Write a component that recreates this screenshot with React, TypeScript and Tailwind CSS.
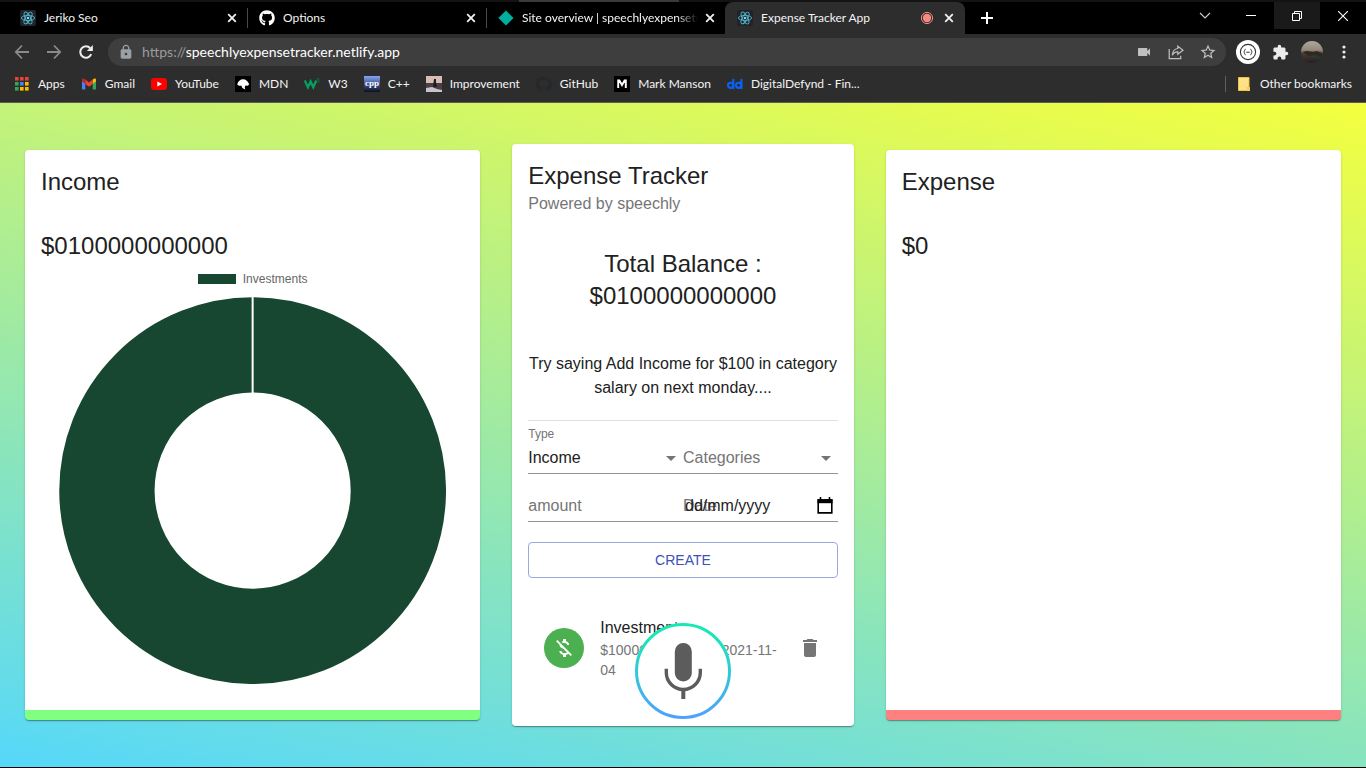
import type { ReactNode } from "react";
import { FaGithub } from "react-icons/fa";
import { MdDelete, MdExtension, MdLock, MdMoneyOff, MdStarBorder, MdVideocam } from "react-icons/md";

function ReactLogo() {
  return (
    <svg viewBox="0 0 16 16" className="size-4 shrink-0" aria-hidden="true">
      <rect width="16" height="16" rx="2" fill="#20232a" />
      <g fill="none" stroke="#53b4cb" strokeWidth="0.9">
        <ellipse cx="8" cy="8" rx="6.6" ry="2.6" />
        <ellipse cx="8" cy="8" rx="6.6" ry="2.6" transform="rotate(60 8 8)" />
        <ellipse cx="8" cy="8" rx="6.6" ry="2.6" transform="rotate(120 8 8)" />
      </g>
      <circle cx="8" cy="8" r="1.3" fill="#7fdcf0" />
    </svg>
  );
}

function CloseIcon() {
  return (
    <svg viewBox="0 0 16 16" className="size-4" fill="none" stroke="#f1f1f1" strokeWidth="1.8" aria-hidden="true">
      <path d="M4.2 4.2l7.6 7.6M11.8 4.2l-7.6 7.6" />
    </svg>
  );
}

type TabProps = { title: string; icon: ReactNode; active?: boolean; divider?: boolean; recording?: boolean };

function Tab({ title, icon, active, divider, recording }: TabProps) {
  return (
    <div
      className={
        active
          ? "relative flex h-8 w-[240px] min-w-0 items-center gap-2 rounded-t-lg bg-[#2d2d2d] pr-2 pl-3"
          : "relative flex h-8 w-[239px] min-w-0 items-center gap-2 pr-[7px] pl-3"
      }
    >
      {icon}
      <button
        type="button"
        className={
          divider || active
            ? "min-w-0 flex-1 text-left whitespace-nowrap"
            : "-mr-1 min-w-0 flex-1 mask-r-from-88% mask-r-to-100% text-left whitespace-nowrap"
        }
      >
        {title}
      </button>
      {recording && (
        <svg viewBox="0 0 14 14" className="-mr-0.5 size-4 p-px" aria-hidden="true">
          <circle cx="7" cy="7" r="5.6" fill="none" stroke="#f28b82" strokeWidth="1" />
          <circle cx="7" cy="7" r="4.2" fill="#f28b82" />
        </svg>
      )}
      <button type="button" aria-label={`Close ${title}`}>
        <CloseIcon />
      </button>
      {divider && <span className="absolute top-1.5 -right-px h-5 w-px bg-[#4a4a4a]" />}
    </div>
  );
}

function WindowControls() {
  return (
    <div className="ml-auto flex h-[27px] self-start text-white">
      <button type="button" aria-label="Search tabs" className="flex w-[46px] items-center justify-center">
        <svg viewBox="0 0 12 12" className="size-3" fill="none" stroke="#cfcfcf" strokeWidth="1.1">
          <path d="M1 3l5 5 5-5" />
        </svg>
      </button>
      <button type="button" aria-label="Minimize" className="flex w-[46px] items-center justify-center">
        <svg viewBox="0 0 10 10" className="size-2.5" stroke="currentColor">
          <path d="M0 4.5h10" />
        </svg>
      </button>
      <button type="button" aria-label="Restore" className="flex w-[46px] items-center justify-center bg-[#1a1a1a]">
        <svg viewBox="0 0 10 10" className="size-2.5" fill="none" stroke="currentColor">
          <path d="M0.5 2.5h7v7h-7zM2.5 2.5v-2h7v7h-2" />
        </svg>
      </button>
      <button type="button" aria-label="Close window" className="flex w-[46px] items-center justify-center">
        <svg viewBox="0 0 10 10" className="size-2.5" fill="none" stroke="currentColor" strokeWidth="1.1">
          <path d="M0 0l10 10M10 0L0 10" />
        </svg>
      </button>
    </div>
  );
}

function TabStrip() {
  return (
    <div className="bg-black">
      <div className="flex h-0.5 bg-[#131313]">
        <div className="ml-[38%] w-40 bg-[#3a3a3a]" />
      </div>
      <div className="flex h-8 items-center pl-2">
        <Tab title="Jeriko Seo" icon={<ReactLogo />} divider />
        <Tab title="Options" icon={<FaGithub className="size-4 shrink-0 text-white" />} divider />
        <Tab
          title="Site overview | speechlyexpensetr"
          icon={
            <svg viewBox="0 0 16 16" className="size-4 shrink-0" aria-hidden="true">
              <path d="M8 0.4L15.6 8 8 15.6 0.4 8z" fill="#00ad9f" />
            </svg>
          }
        />
        <Tab title="Expense Tracker App" icon={<ReactLogo />} active recording />
        <button type="button" aria-label="New tab" className="ml-4 flex size-3 items-center justify-center">
          <svg viewBox="0 0 12 12" className="size-3" stroke="#fff" strokeWidth="2">
            <path d="M6 0v12M0 6h12" />
          </svg>
        </button>
        <WindowControls />
      </div>
    </div>
  );
}

function AddressBar() {
  return (
    <div className="flex items-center pt-1 pr-1.5">
      <div className="flex pl-1.5">
        <button type="button" aria-label="Back" className="flex h-7 w-8 items-center justify-center">
          <svg viewBox="0 0 16 16" className="size-4" fill="none" stroke="#8a8a8a" strokeWidth="1.8">
            <path d="M15 8H2M8 1.5L1.8 8 8 14.5" />
          </svg>
        </button>
        <button type="button" aria-label="Forward" className="flex h-7 w-8 items-center justify-center">
          <svg viewBox="0 0 16 16" className="size-4" fill="none" stroke="#8a8a8a" strokeWidth="1.8">
            <path d="M1 8h13M8 1.5L14.2 8 8 14.5" />
          </svg>
        </button>
        <button type="button" aria-label="Reload" className="flex h-7 w-8 items-center justify-center">
          <svg viewBox="0 0 16 16" className="size-4" fill="none" stroke="#ececec" strokeWidth="2.1">
            <path d="M13.2 10.2A5.7 5.7 0 1 1 12.2 4.2" />
            <path d="M14.9 1v6H8.9z" fill="#ececec" stroke="none" />
          </svg>
        </button>
      </div>
      <div className="ml-1.5 flex h-7 flex-1 items-center rounded-full bg-[#3e3e3e] pr-0.5 pl-2.5 text-[#c0c0c0]">
        <MdLock className="size-4 text-[#9aa0a6]" />
        <div className="ml-2 flex-1 text-sm text-[#9b9b9b]">
          https://<span className="text-white">speechlyexpensetracker.netlify.app</span>
        </div>
        <button type="button" aria-label="Camera" className="flex w-8 justify-center">
          <MdVideocam className="size-4" />
        </button>
        <button type="button" aria-label="Share" className="flex w-8 justify-center">
          <svg viewBox="0 0 16 16" className="size-4" fill="none" stroke="currentColor" strokeWidth="1.2">
            <path d="M1.2 5v9.6h11.5v-2.8" />
            <path d="M9.8 2.1L15 6.2 9.8 10.3V7.9C7 7.8 5.4 9 4.3 11.3 4.5 7.6 6.4 4.9 9.8 4.5z" />
          </svg>
        </button>
        <button type="button" aria-label="Bookmark this page" className="flex w-8 justify-center">
          <MdStarBorder className="size-[18px]" />
        </button>
      </div>
      <div className="flex items-center pl-1.5">
        <button type="button" aria-label="JSON extension" className="flex w-8 justify-center">
          <svg viewBox="0 0 24 24" className="size-6">
            <circle cx="12" cy="12" r="12" fill="#fff" />
            <circle cx="12" cy="12" r="7.6" fill="none" stroke="#333" strokeWidth="1.1" />
            <path
              d="M9.6 9.2c-1.3 0-.7 2-1.8 2.8 1.1.8.5 2.8 1.8 2.8M14.4 9.2c1.3 0 .7 2 1.8 2.8-1.1.8-.5 2.8-1.8 2.8M10.3 12.2h3.4"
              fill="none"
              stroke="#333"
            />
          </svg>
        </button>
        <button type="button" aria-label="Extensions" className="flex w-8 justify-center">
          <MdExtension className="size-[17px] text-[#ececec]" />
        </button>
        <button type="button" aria-label="Profile" className="flex w-8 justify-center">
          <svg viewBox="0 0 22 22" className="size-[22px]">
            <defs>
              <clipPath id="avatar">
                <circle cx="11" cy="11" r="11" />
              </clipPath>
              <linearGradient id="avatar-sky" x2="0" y2="1">
                <stop offset="0" stopColor="#b0a69c" />
                <stop offset="0.42" stopColor="#93887d" />
                <stop offset="0.55" stopColor="#4a3c35" />
                <stop offset="1" stopColor="#241f1f" />
              </linearGradient>
            </defs>
            <g clipPath="url(#avatar)">
              <rect width="22" height="22" fill="url(#avatar-sky)" />
              <path d="M2 11l4-1 6 1 4-1 6 3v4l-8-3-6 1z" fill="#32271f" />
              <path d="M13 13l5 2-1 3-4-1z" fill="#223a35" />
            </g>
          </svg>
        </button>
        <button type="button" aria-label="Menu" className="flex w-8 justify-center">
          <svg viewBox="0 0 4 14" className="h-3.5 w-1" fill="#ececec">
            <circle cx="2" cy="2" r="1.6" />
            <circle cx="2" cy="7" r="1.6" />
            <circle cx="2" cy="12" r="1.6" />
          </svg>
        </button>
      </div>
    </div>
  );
}

const appDots = ["#ea4335", "#ea4335", "#ea4335", "#34a853", "#4285f4", "#fbbc04", "#34a853", "#fbbc04", "#fbbc04"];

const bookmarks: { label: string; icon: ReactNode }[] = [
  {
    label: "Apps",
    icon: appDots.map((color, i) => (
      <rect key={i} x={1 + (i % 3) * 5} y={1 + Math.floor(i / 3) * 5} width="3.6" height="3.6" fill={color} />
    )),
  },
  {
    label: "Gmail",
    icon: (
      <>
        <path d="M1 4v8.4c0 .6.4 1 1 1h2.3V7z" fill="#4285f4" />
        <path d="M15 4v8.4c0 .6-.4 1-1 1h-2.3V7z" fill="#34a853" />
        <path d="M11.7 3.6L13 2.7c.9-.6 2 0 2 1.1v1.5L11.7 8z" fill="#fbbc04" />
        <path d="M4.3 8V3.6L8 6.4l3.7-2.8V8L8 10.8z" fill="#ea4335" />
        <path d="M4.3 3.6L3 2.7c-.9-.6-2 0-2 1.1v1.5L4.3 8z" fill="#c5221f" />
      </>
    ),
  },
  {
    label: "YouTube",
    icon: (
      <>
        <rect x="0" y="2" width="16" height="12" rx="3" fill="#f00" />
        <path d="M6.3 5.4v5.2L11 8z" fill="#fff" />
      </>
    ),
  },
  {
    label: "MDN",
    icon: (
      <>
        <rect width="16" height="16" fill="#000" />
        <path
          d="M2.2 8.6C3 5 5.5 3 8.5 3.2c2 .1 3 1.3 4.3 2.600l1.400 2.500-1.300 1.500-2.300-.3-.9 1.500.6 2.500-3-1.500-.8-2.300-2.500 0z"
          fill="#fff"
        />
      </>
    ),
  },
  {
    label: "W3",
    icon: (
      <>
        <path d="M0.8 4.5l3.1 6.7L6.6 5.5l2.6 5.7 3.1-6.7" fill="none" stroke="#04a05f" strokeWidth="2.3" />
        <path d="M12.6 2.7h2.6l-1.3 1.5c1.8.1 1.8 2.4-.5 2.2" fill="none" stroke="#04784a" strokeWidth="0.9" />
      </>
    ),
  },
  {
    label: "C++",
    icon: (
      <>
        <defs>
          <linearGradient id="cpp" x2="0" y2="1">
            <stop offset="0" stopColor="#88a5f0" />
            <stop offset="0.5" stopColor="#41568f" />
            <stop offset="1" stopColor="#0c1020" />
          </linearGradient>
        </defs>
        <rect width="16" height="16" fill="url(#cpp)" />
        <text x="8" y="10" textAnchor="middle" fontFamily="Liberation Serif, serif" fontWeight="700" fontSize="9" fill="#fff">
          cpp
        </text>
      </>
    ),
  },
  {
    label: "Improvement",
    icon: (
      <>
        <rect width="16" height="8" fill="#d8bdb6" />
        <rect y="7" width="16" height="9" fill="#4a4148" />
        <path d="M8 3h2v3l1 5H7z" fill="#231c20" />
        <path d="M0 12l6-1 5 2 5 1v2H0z" fill="#c9c4cc" />
      </>
    ),
  },
  { label: "GitHub", icon: <FaGithub size={16} color="#24292e" /> },
  {
    label: "Mark Manson",
    icon: (
      <>
        <rect width="16" height="16" fill="#000" />
        <path d="M4.2 12V4.5h1.2L8 9l2.6-4.5h1.2V12" fill="none" stroke="#fff" strokeWidth="1.9" />
      </>
    ),
  },
  {
    label: "DigitalDefynd - Fin...",
    icon: (
      <g fill="none" stroke="#0a62f5" strokeWidth="2.1">
        <circle cx="3.6" cy="9.3" r="2.6" />
        <path d="M6.3 3v10" />
        <circle cx="11.6" cy="9.3" r="2.6" />
        <path d="M14.4 3v10" />
      </g>
    ),
  },
];

function BookmarksBar() {
  return (
    <nav aria-label="Bookmarks" className="flex h-[37px] items-center gap-4 border-b border-[#5c5c5c] pr-3.5 pl-3.5">
      {bookmarks.map(({ label, icon }) => (
        <a key={label} href="#bookmark" className="flex items-center gap-2 whitespace-nowrap">
          <svg viewBox="0 0 16 16" className="size-4" aria-hidden="true">
            {icon}
          </svg>
          {label}
        </a>
      ))}
      <a href="#other" className="ml-auto flex items-center gap-2 border-l border-[#5f5f5f] pl-2.5 whitespace-nowrap">
        <svg viewBox="0 0 16 16" className="size-4" aria-hidden="true">
          <path d="M2.5 1.5h10.5v13H2.5z" fill="#ffe287" stroke="#eec23f" />
          <path d="M10.5 11h3.5v4h-3.5z" fill="#f3cf5f" />
        </svg>
        Other bookmarks
      </a>
    </nav>
  );
}

const cardShadow =
  "shadow-[0_2px_1px_-1px_rgba(0,0,0,0.2),0_1px_1px_0_rgba(0,0,0,0.14),0_1px_3px_0_rgba(0,0,0,0.12)]";

function DoughnutChart() {
  return (
    <figure>
      <figcaption className="flex items-center justify-center gap-[7px] pt-[11px] pb-3 text-xs leading-3 text-[#666]">
        <span className="h-2.5 w-[38px] bg-[#174731]" />
        Investments
      </figcaption>
      <div className="px-[18px]">
        <svg viewBox="0 0 388 388" className="block w-full" role="img" aria-label="Income by category">
          <circle cx="194" cy="194" r="146" fill="none" stroke="#174731" strokeWidth="95.5" />
          <path d="M194 0v97" stroke="#fff" strokeWidth="2" />
        </svg>
      </div>
    </figure>
  );
}

function SummaryCard({ title, total, accent, children }: { title: string; total: string; accent: string; children?: ReactNode }) {
  return (
    <section className={`my-1.5 rounded border-b-[10px] bg-white ${accent} ${cardShadow}`}>
      <h2 className="p-4 text-2xl">{title}</h2>
      <div className="px-4 pt-4 pb-6">
        <p className="text-2xl">{total}</p>
        {children}
      </div>
    </section>
  );
}

type SelectFieldProps = { id: string; name: string; label?: string; options: string[]; muted?: boolean };

function SelectField({ id, name, label, options, muted }: SelectFieldProps) {
  return (
    <div className="relative border-b border-[#949494] pt-4">
      {label && (
        <label htmlFor={id} className="absolute top-0 left-0 text-xs leading-4 text-[#757575]">
          {label}
        </label>
      )}
      <select
        id={id}
        aria-label={name}
        className={muted ? "block h-[31px] w-full appearance-none text-[#757575]" : "block h-[31px] w-full appearance-none"}
      >
        {options.map((option) => (
          <option key={option}>{option}</option>
        ))}
      </select>
      <svg viewBox="0 0 10 5" className="pointer-events-none absolute right-[7px] bottom-3 h-[5px] w-2.5" fill="#757575">
        <path d="M0 0l5 5 5-5z" />
      </svg>
    </div>
  );
}

function TransactionForm() {
  return (
    <form className="pt-[5px]" onSubmit={(event) => event.preventDefault()}>
      <div className="grid grid-cols-2">
        <SelectField id="type" name="Type" label="Type" options={["Income", "Expense"]} />
        <SelectField id="category" name="Categories" options={["Categories", "Investments", "Salary"]} muted />
        <div className="border-b border-[#949494] pt-4">
          <input
            id="amount"
            aria-label="amount"
            placeholder="amount"
            className="block h-[31px] w-full placeholder:text-[#757575] placeholder:opacity-100"
          />
        </div>
        <div className="relative flex items-center border-b border-[#949494] pt-4">
          <label htmlFor="date" className="absolute top-5 left-0 text-[#757575]">
            Date
          </label>
          <input id="date" defaultValue="dd/mm/yyyy" className="relative h-[31px] w-full min-w-0 flex-1 pl-0.5" />
          <button type="button" aria-label="Open calendar" className="mr-[5px]">
            <svg viewBox="0 0 16 17" className="h-[17px] w-4" fill="none" stroke="#000">
              <path d="M1.2 3h13.6v12.9H1.2z" strokeWidth="1.6" />
              <path d="M0.5 2.2h15v4h-15z" fill="#000" stroke="none" />
              <path d="M3.5 0v3M12.5 0v3" strokeWidth="1.6" />
            </svg>
          </button>
        </div>
      </div>
      <button type="submit" className="mt-5 h-9 w-full rounded border border-[#9fa8da] text-sm text-[#3f51b5]">
        CREATE
      </button>
    </form>
  );
}

function TransactionItem() {
  return (
    <div className="flex items-center px-4">
      <span className="flex size-10 shrink-0 items-center justify-center rounded-full bg-[#4caf50] text-white">
        <MdMoneyOff className="size-6" />
      </span>
      <div className="ml-4 flex-1">
        <p className="text-base leading-6">Investments</p>
        <p className="text-sm leading-5 text-[#757575]">$1000000000000 - 2021-11-04</p>
      </div>
      <button type="button" aria-label="Delete" className="ml-4 text-[#757575]">
        <MdDelete className="size-6" />
      </button>
    </div>
  );
}

function TrackerCard() {
  return (
    <section className={`rounded bg-white ${cardShadow}`}>
      <header className="p-4">
        <h1 className="text-2xl">Expense Tracker</h1>
        <p className="text-[#757575]">Powered by speechly</p>
      </header>
      <div className="px-4 pt-4 pb-[46px]">
        <p className="text-center text-2xl">
          Total Balance :
          <br />
          $0100000000000
        </p>
        <p className="mt-10 text-center">Try saying Add Income for $100 in category salary on next monday....</p>
        <hr className="mt-5 border-[#e0e0e0]" />
        <TransactionForm />
        <div className="mt-[38px]">
          <TransactionItem />
        </div>
      </div>
    </section>
  );
}

function MicButton() {
  return (
    <button type="button" aria-label="Hold to talk" className="fixed bottom-[49px] left-1/2 -ml-12 size-24 rounded-full bg-white">
      <svg viewBox="0 0 96 96" className="size-24">
        <defs>
          <linearGradient id="mic-ring" x2="0" y2="1">
            <stop offset="0" stopColor="#15e8b5" />
            <stop offset="0.2" stopColor="#1de2bd" />
            <stop offset="1" stopColor="#4fa1ff" />
          </linearGradient>
        </defs>
        <circle cx="48" cy="48" r="46.5" fill="none" stroke="url(#mic-ring)" strokeWidth="3" />
        <rect x="39.8" y="20" width="17" height="38.5" rx="8.5" fill="#5c5c5c" />
        <path d="M31.3 45.8V49.5a17 17 0 0 0 34 0V45.8" fill="none" stroke="#5c5c5c" strokeWidth="3.4" />
        <path d="M48.3 66v10" stroke="#5c5c5c" strokeWidth="4" />
      </svg>
    </button>
  );
}

export default function App() {
  return (
    <div className="flex min-h-screen flex-col border-b border-black font-['Liberation_Sans',Arial,sans-serif] text-[#212121]">
      <header className="bg-[#2d2d2d] font-['Lato','Noto_Sans',sans-serif] text-xs text-[#f4f4f4]">
        <TabStrip />
        <AddressBar />
        <BookmarksBar />
      </header>
      <main className="flex flex-1 flex-col justify-center bg-[linear-gradient(12deg,#56d8fa,#f4ff3e)] px-[25px]">
        <div className="grid grid-cols-[4fr_3fr_4fr] gap-8">
          <SummaryCard title="Income" total="$0100000000000" accent="border-b-[#80ff80]">
            <DoughnutChart />
          </SummaryCard>
          <TrackerCard />
          <SummaryCard title="Expense" total="$0" accent="border-b-[#ff8080]" />
        </div>
      </main>
      <MicButton />
    </div>
  );
}
